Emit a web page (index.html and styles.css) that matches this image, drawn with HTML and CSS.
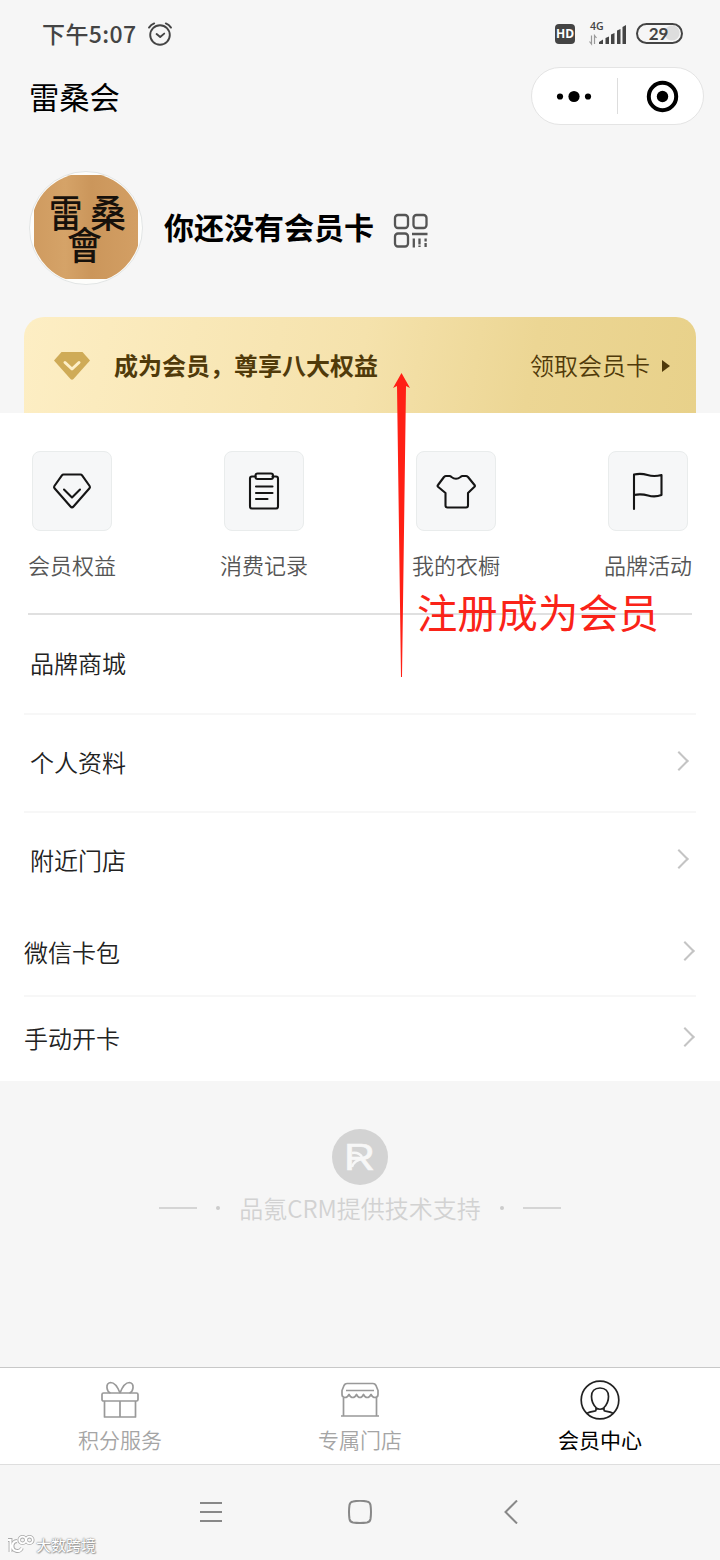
FILE: index.html
```
<!DOCTYPE html>
<html lang="zh-CN">
<head>
  <meta charset="UTF-8">
  <meta name="viewport" content="width=device-width, initial-scale=1.0">
  <title>雷桑会</title>
  <link rel="stylesheet" href="styles.css">
</head>
<body>
  <header class="status-bar">
    <span class="status-time">下午5:07</span>
    <svg class="alarm" width="26" height="26" viewBox="0 0 26 26" fill="none" stroke="#444" stroke-width="1.9" stroke-linecap="round" stroke-linejoin="round">
      <circle cx="13" cy="14" r="9.8"/>
      <path d="M9.6 13l3.6 3 4-3.4M2 6.6Q4 3.6 7.2 2.4M18.8 2.4Q22 3.6 24 6.6"/>
    </svg>
    <div class="status-right">
      <span class="hd">HD</span>
      <div class="signal">
        <span class="signal-type">4G</span>
        <svg width="40" height="26" viewBox="0 0 40 26">
          <path d="M3.5 14.500v8.500l-2-2.500M6.500 23v-8.500l2 2.500" fill="none" stroke="#999" stroke-width="1.200"/>
          <path d="M11 23v-2l4-2.500V23zM17.500 17l3.500-1.500V23h-3.500zM23 13.500l3.500-1.500v11H23zM29 9.500l3.500-1.500v15H29zM34.500 6l3.500-2v19h-3.500z" fill="#444"/>
        </svg>
      </div>
      <span class="battery">29</span>
    </div>
  </header>

  <div class="title-bar">
    <h1>雷桑会</h1>
    <div class="capsule">
      <svg class="dots" width="86" height="56" viewBox="0 0 86 56">
        <circle cx="28" cy="28.500" r="3.100"/>
        <circle cx="42" cy="28.500" r="5.600"/>
        <circle cx="56" cy="28.500" r="3.100"/>
      </svg>
      <svg class="close" width="85" height="56" viewBox="0 0 85 56">
        <circle cx="44.500" cy="28.500" r="13.700" fill="none" stroke="#000" stroke-width="4"/>
        <circle cx="44.500" cy="28.500" r="5.700"/>
      </svg>
    </div>
  </div>

  <section class="profile">
    <svg class="avatar" width="114" height="114" viewBox="0 0 114 114">
      <defs>
        <clipPath id="round"><circle cx="57" cy="57" r="55"/></clipPath>
        <linearGradient id="wood">
          <stop offset="0" stop-color="#cf9b60"/>
          <stop offset=".3" stop-color="#d5a368"/>
          <stop offset=".55" stop-color="#cb965b"/>
          <stop offset="1" stop-color="#d39f64"/>
        </linearGradient>
      </defs>
      <circle cx="57" cy="57" r="56.500" fill="#fdfdfb" stroke="#e2e5e5"/>
      <rect x="5" y="4" width="104" height="104" fill="url(#wood)" clip-path="url(#round)"/>
      <g class="avatar-text">
        <text transform="translate(20 56) scale(.88 1)">雷</text>
        <text transform="translate(61 56) scale(.95 1)">桑</text>
        <text transform="translate(38 88) scale(.92 1)">會</text>
      </g>
    </svg>
    <h2>你还没有会员卡</h2>
    <svg class="qr" width="36" height="36" viewBox="0 0 36 36" fill="none" stroke="#555" stroke-width="2.300">
      <rect x="2" y="2" width="13" height="13" rx="3"/>
      <rect x="20.500" y="2" width="13" height="13" rx="3"/>
      <rect x="2" y="20.500" width="13" height="13" rx="3"/>
      <path d="M19 21h15.500M20.800 25.500v9M26.500 25.500v6M32.600 25.500v3M26.500 32.500v1.500M32.600 30v4"/>
    </svg>
  </section>

  <a class="banner">
    <svg width="38" height="30" viewBox="0 0 38 30">
      <path d="M8.500 1h21L37 9.500 20.500 28q-1.500 1.500-3 0L1 9.500z" fill="#cfab57"/>
      <path d="M12 11.500l7 6.500 7-6.500" fill="none" stroke="#fdefc9" stroke-width="3" stroke-linecap="round" stroke-linejoin="round"/>
    </svg>
    <strong>成为会员，尊享八大权益</strong>
    <span class="get-card">领取会员卡</span>
    <i class="caret"></i>
  </a>

  <main class="panel">
    <nav class="shortcuts">
      <a class="shortcut">
        <span class="tile">
          <svg viewBox="0 0 40 40"><path d="M11.500 3.500h17q1 0 1.600.8l7.500 10.700q.8 1.200-.1 2.300L21.500 35.500q-1.500 1.700-3 0L2.500 17.300q-.9-1.100-.1-2.300l7.500-10.700q.6-.8 1.600-.8zM12 18.500l8 8 8-8"/></svg>
        </span>
        会员权益
      </a>
      <a class="shortcut">
        <span class="tile">
          <svg viewBox="0 0 40 40"><path d="M11.500 5.500H8q-2 0-2 2v28q0 2 2 2h24q2 0 2-2v-28q0-2-2-2h-3.500"/><rect x="11.500" y="2.500" width="17.500" height="5.500" rx="2"/><path d="M12 15.500h16.500M12 22h16.500M12 28h11.500"/></svg>
        </span>
        消费记录
      </a>
      <a class="shortcut">
        <span class="tile">
          <svg viewBox="0 0 40 40"><path d="M10 5h3.500q1 0 2 1 4.500 3.500 9 0 1-1 2-1H30q1 0 2 1l6.500 8q.8 1 0 1.800L32 22v12.500q0 2-2 2H11.500q-2 0-2-2V22l-7.500-6.200q-.8-.8 0-1.800L8 6q1-1 2-1z"/></svg>
        </span>
        我的衣橱
      </a>
      <a class="shortcut">
        <span class="tile">
          <svg viewBox="0 0 40 40"><path d="M6 38V3.500q7-1.500 13.500.5t14 0V24q-6.500 2.500-13.500.5t-14-.5"/></svg>
        </span>
        品牌活动
      </a>
    </nav>

    <ul class="menu">
      <li>品牌商城</li>
      <li>个人资料<i class="arrow"></i></li>
      <li>附近门店<i class="arrow"></i></li>
    </ul>
    <ul class="menu menu-small">
      <li>微信卡包<i class="arrow"></i></li>
      <li>手动开卡<i class="arrow"></i></li>
    </ul>
  </main>

  <footer class="support">
    <svg width="56" height="56" viewBox="0 0 56 56">
      <circle cx="28" cy="28" r="28" fill="#d3d3d3"/>
      <text class="support-logo" x="12" y="41" textLength="31" lengthAdjust="spacingAndGlyphs">R</text>
      <path d="M20 24q7-1 10 4M20 38q2-7 11-8" fill="none" stroke="#f7f7f7" stroke-width="2.500"/>
    </svg>
    <div class="support-row">
      <i class="dash"></i><i class="dot"></i>
      <span>品氪CRM提供技术支持</span>
      <i class="dot"></i><i class="dash"></i>
    </div>
  </footer>

  <nav class="tab-bar">
    <a class="tab">
      <svg viewBox="0 0 40 40"><rect x="2" y="13" width="36" height="8" rx="1.500"/><path d="M4.500 21v16h31V21M20 21v16M20 13Q16 2.500 10.500 2.500 6.500 3 7 8q.5 4 3.500 5M20 13q4-10.500 9.500-10.500 4 .5 3.500 5.500-.5 4-3.500 5"/></svg>
      积分服务
    </a>
    <a class="tab">
      <svg viewBox="0 0 40 40"><path d="M7 3.500h26q2 0 3 2l2 5v4q0 3-3 3-2.500 0-4-3-1.500 3-3.800 3-2.200 0-3.700-3-1.500 3-3.500 3t-3.500-3q-1.500 3-3.700 3-2.300 0-3.800-3-1.500 3-4 3-3 0-3-3v-4l2-5q1-2 3-2zM6 10.500h28M3.500 17v19M36.500 17v19M1 36h38"/></svg>
      专属门店
    </a>
    <a class="tab active">
      <svg viewBox="0 0 40 40"><circle cx="20" cy="20" r="18.800"/><path d="M20 8c5.500 0 8.500 3.500 8.500 8.500 0 5-1.500 8-4.500 11V30q0 1 1.500 1.200 5.500.8 8 2.200M20 8c-5.500 0-8.500 3.500-8.500 8.500 0 5 1.500 8 4.500 11V30q0 1-1.500 1.200-5.500.8-8 2.200M16 28q4 2.500 8 0"/></svg>
      会员中心
    </a>
  </nav>

  <div class="system-nav">
    <svg width="22" height="24" viewBox="0 0 22 24"><path d="M0 3h22M0 12h22M0 21h22"/></svg>
    <svg width="24" height="24" viewBox="0 0 24 24"><path d="M5 1.500Q12 0 19 1.500q3 .5 3.500 3.500 1 7 0 14-.5 3-3.500 3.500-7 1-14 0Q2 22 1.500 19q-1-7 0-14Q2 2 5 1.500z"/></svg>
    <svg width="14" height="24" viewBox="0 0 14 24"><path d="M13 .5L1.500 12 13 23.500"/></svg>
  </div>

  <!-- hint on top of the page -->
  <svg class="hint-arrow" width="18" height="306" viewBox="0 0 18 306">
    <path d="M9.500 1l8.500 15-4-2-4 291h-1L5 14l-4 2z" fill="#ff2015"/>
  </svg>
  <p class="hint-text">注册成为会员</p>

  <div class="watermark">
    <svg width="28" height="20" viewBox="0 0 28 20" fill="none">
      <path d="M1 5h2.500v12M15 13a5 5 0 1 1-5-7" stroke="#aaa" stroke-width="3.800"/>
      <circle cx="15.500" cy="5" r="3.300" stroke="#aaa" stroke-width="3.500"/>
      <circle cx="22.500" cy="5" r="3.300" stroke="#aaa" stroke-width="3.500"/>
      <path d="M1 5h2.500v12M15 13a5 5 0 1 1-5-7" stroke="#fff" stroke-width="2"/>
      <circle cx="15.500" cy="5" r="3.300" stroke="#fff" stroke-width="1.800"/>
      <circle cx="22.500" cy="5" r="3.300" stroke="#fff" stroke-width="1.800"/>
    </svg>
    <span>大数跨境</span>
  </div>
</body>
</html>
```

FILE: styles.css
```
* {
  margin: 0;
  padding: 0;
  box-sizing: border-box;
}
body {
  position: relative;
  width: 720px;
  height: 1560px;
  display: flex;
  flex-direction: column;
  background: #f6f6f6;
  color: #222;
  font-family: "Noto Sans CJK SC", sans-serif;
  overflow: hidden;
}
svg {
  display: block;
  flex: none;
}
ul {
  list-style: none;
}

/* status bar */
.status-bar {
  height: 67px;
  padding: 0 37px 0 42px;
  display: flex;
  align-items: center;
  color: #444;
}
.status-time {
  padding-bottom: 2px;
  font-size: 23px;
  font-weight: 500;
  letter-spacing: 0.4px;
}
.alarm {
  margin-left: 10px;
}
.status-right {
  margin-left: auto;
  display: flex;
  align-items: center;
}
.hd {
  width: 20px;
  height: 20px;
  margin-right: 13px;
  border-radius: 4px;
  background: #444;
  color: #fff;
  font: bold 12px/20px "Open Sans", sans-serif;
  text-align: center;
}
.signal {
  position: relative;
  margin-right: 8px;
}
.signal-type {
  position: absolute;
  top: -1px;
  left: 2px;
  font: 600 10.5px/12px "Open Sans", sans-serif;
}
.battery {
  width: 47px;
  height: 21px;
  padding-right: 2px;
  border: 2px solid #444;
  border-radius: 11px;
  background: radial-gradient(circle at 34px 8px, #ddd 7px, #f6f6f6 8px);
  font: bold 17px/17px Lato, sans-serif;
  text-align: center;
}

/* title */
.title-bar {
  height: 58px;
  padding: 0 16px 0 29px;
  display: flex;
  align-items: center;
  justify-content: space-between;
}
.title-bar h1 {
  padding-bottom: 1px;
  color: #000;
  font-size: 30.3px;
  font-weight: 400;
}
.capsule {
  width: 173px;
  height: 58px;
  display: flex;
  border: 1px solid #e4e4e4;
  border-radius: 29px;
  background: #fff;
}
.dots {
  background: linear-gradient(#ddd, #ddd) right center / 1px 36px no-repeat;
}

/* profile */
.profile {
  height: 192px;
  padding: 46px 29px 0;
  display: flex;
}
.profile h2 {
  margin-left: 21px;
  color: #000;
  font-size: 30px;
  font-weight: 700;
  line-height: 110px;
}
.avatar-text {
  fill: #17110b;
  font-family: "Noto Sans CJK TC", serif;
  font-size: 38px;
  font-weight: 500;
}
.qr {
  margin: 42px 0 0 19px;
}

/* member banner */
.banner {
  height: 96px;
  margin: 0 24px;
  padding: 2px 26px 0 29px;
  display: flex;
  align-items: center;
  border-radius: 20px 20px 0 0;
  background: linear-gradient(100deg, #fdeec4, #f5e2ac 50%, #ecd694 75%, #e8d18a);
  color: #503a0a;
  font-size: 24px;
}
.banner strong {
  margin-left: 23px;
  padding-bottom: 3px;
  font-weight: 700;
}
.get-card {
  margin-left: auto;
  padding-bottom: 3px;
  font-weight: 350;
}
.caret {
  margin-left: 12px;
  border-left: 8px solid #503a0a;
  border-top: 6px solid transparent;
  border-bottom: 6px solid transparent;
}

/* white panel */
.panel {
  height: 668px;
  padding: 38px 24px 0;
  background: #fff;
  font-weight: 350;
}
.shortcuts {
  height: 164px;
  margin: 0 4px;
  display: flex;
  justify-content: space-between;
  border-bottom: 2px solid #e0e0e0;
}
.shortcut {
  width: 88px;
  display: flex;
  flex-direction: column;
  align-items: center;
  color: #555;
  font-size: 22px;
  line-height: 32px;
  white-space: nowrap;
}
.tile {
  width: 80px;
  height: 80px;
  margin-bottom: 17px;
  display: flex;
  align-items: center;
  justify-content: center;
  border: 1px solid #e9ecec;
  border-radius: 8px;
  background: #f6f7f8;
}
.tile svg {
  width: 40px;
  height: 40px;
  fill: none;
  stroke: #151515;
  stroke-width: 2.1;
  stroke-linecap: round;
  stroke-linejoin: round;
}
.menu li {
  height: 98px;
  padding: 0 6px 3px;
  display: flex;
  align-items: center;
  justify-content: space-between;
  border-bottom: 2px solid #f7f7f7;
  font-size: 24px;
}
.menu li:first-child {
  height: 100px;
}
.menu li:last-child {
  border-bottom: none;
  padding-bottom: 5px;
}
.menu-small li,
.menu-small li:first-child {
  height: 86px;
  padding: 0 0 3px;
}
.arrow {
  width: 14px;
  height: 14px;
  margin: 0 4px 1px 0;
  border-top: 2px solid #c4c4c4;
  border-right: 2px solid #c4c4c4;
  transform: rotate(45deg);
}

/* support */
.support {
  height: 286px;
  padding-top: 48px;
  display: flex;
  flex-direction: column;
  align-items: center;
}
.support-logo {
  fill: #f7f7f7;
  stroke: #f7f7f7;
  stroke-width: 0.6;
  font: 37px "Liberation Sans", sans-serif;
}
.support-row {
  margin-top: 5px;
  display: flex;
  align-items: center;
  color: #d2d2d2;
  font-size: 24px;
  font-weight: 350;
  line-height: 36px;
}
.dash {
  width: 38px;
  height: 2px;
  background: #d5d5d5;
}
.dot {
  width: 4px;
  height: 4px;
  margin: 0 19px;
  border-radius: 50%;
  background: #ccc;
}

/* tabs */
.tab-bar {
  height: 98px;
  display: flex;
  border-top: 1px solid #c8c8c8;
  border-bottom: 1px solid #dedede;
  background: #fff;
}
.tab {
  flex: 1;
  padding-top: 12px;
  display: flex;
  flex-direction: column;
  align-items: center;
  color: #a5a5a5;
  font-size: 21px;
  font-weight: 350;
  line-height: 30px;
}
.tab svg {
  width: 40px;
  height: 40px;
  margin-bottom: 4px;
  fill: none;
  stroke: #999;
  stroke-width: 1.7;
  stroke-linejoin: round;
}
.tab.active {
  color: #000;
  font-weight: 400;
}
.tab.active svg {
  stroke: #222;
}
.system-nav {
  height: 93px;
  padding-left: 200px;
  display: flex;
  align-items: center;
  fill: none;
  stroke: #888;
  stroke-width: 2;
}
.system-nav svg + svg {
  margin-left: 126px;
}
.system-nav svg:last-child {
  margin-left: 132px;
}

/* hint */
.hint-arrow {
  position: absolute;
  left: 392px;
  top: 372px;
}
.hint-text {
  position: absolute;
  left: 417px;
  top: 581px;
  color: #fa2318;
  font-size: 40.3px;
  line-height: 60px;
}
.watermark {
  position: absolute;
  left: 7px;
  top: 1534px;
  display: flex;
  align-items: center;
  color: #fff;
  font-size: 15px;
  line-height: 22px;
  text-shadow: 0 0 1px #888, 0 0 2px #888, 1px 1px 1px #aaa;
}
.watermark span {
  margin-left: 1px;
}
```
